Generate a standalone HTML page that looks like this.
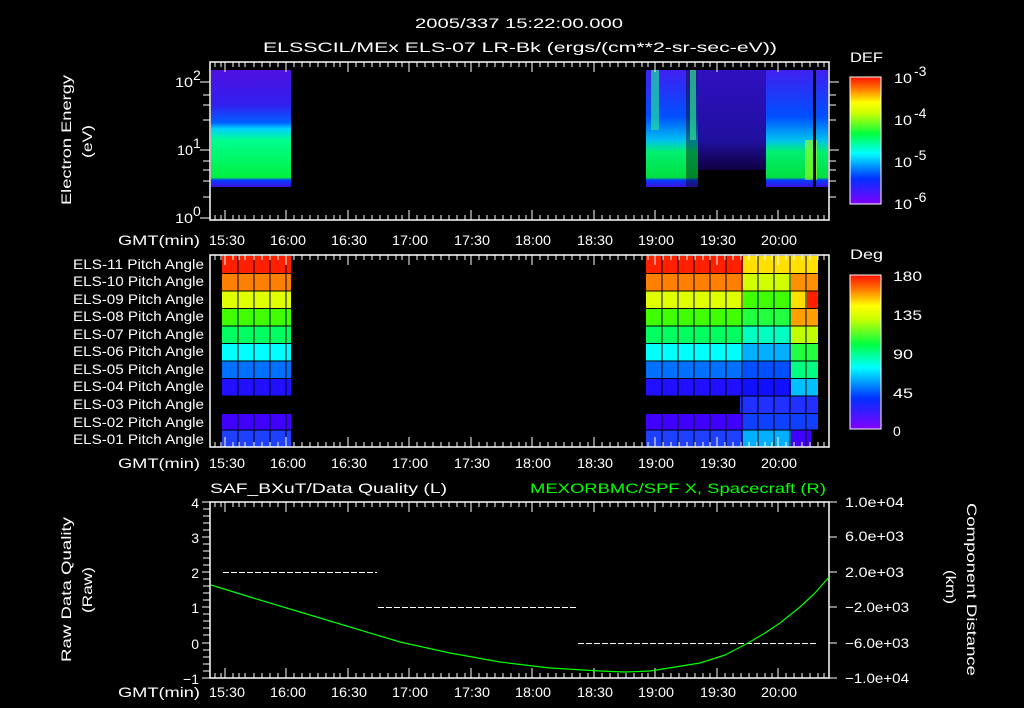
<!DOCTYPE html>
<html><head><meta charset="utf-8"><style>
html,body{margin:0;padding:0;background:#000;}
svg{display:block}
text{font-family:"Liberation Sans",sans-serif;fill:#fff;font-size:14px}
</style></head><body>
<svg width="1024" height="708" viewBox="0 0 1024 708" xmlns="http://www.w3.org/2000/svg">
<defs>
<linearGradient id="def" x1="0" y1="1" x2="0" y2="0">
<stop offset="0" stop-color="#8000ff"/><stop offset="0.2" stop-color="#0030ff"/><stop offset="0.4" stop-color="#00ffff"/><stop offset="0.55" stop-color="#00ff40"/><stop offset="0.72" stop-color="#d0ff00"/><stop offset="0.8" stop-color="#ffff00"/><stop offset="0.9" stop-color="#ff8000"/><stop offset="1" stop-color="#ff1000"/>
</linearGradient>
<linearGradient id="spL" x1="0" y1="0" x2="0" y2="1">
<stop offset="0" stop-color="#5010e0"/><stop offset="0.3" stop-color="#3020f0"/><stop offset="0.45" stop-color="#0060ff"/><stop offset="0.5" stop-color="#00d0ff"/><stop offset="0.6" stop-color="#00ff90"/><stop offset="0.92" stop-color="#00f040"/><stop offset="0.94" stop-color="#0040ff"/><stop offset="1" stop-color="#4010e0"/>
</linearGradient>
<linearGradient id="spR" x1="0" y1="0" x2="0" y2="1">
<stop offset="0" stop-color="#4020f0"/><stop offset="0.4" stop-color="#0050ff"/><stop offset="0.6" stop-color="#00c0f0"/><stop offset="0.7" stop-color="#00f070"/><stop offset="0.92" stop-color="#00e040"/><stop offset="0.94" stop-color="#0040ff"/><stop offset="1" stop-color="#4010e0"/>
</linearGradient>
<linearGradient id="spM" x1="0" y1="0" x2="0" y2="1">
<stop offset="0" stop-color="#3010c0"/><stop offset="0.7" stop-color="#2010a0"/><stop offset="1" stop-color="#100040"/>
</linearGradient>
<g id="tdn" stroke="#fff" stroke-width="1">
<path d="M225 0v10M286 0v10M348 0v10M409 0v10M471 0v10M532 0v10M594 0v10M655 0v10M717 0v10M778 0v10"/>
<path d="M215 0v5M221 0v5M233 0v5M239 0v5M245 0v5M254 0v5M262 0v5M270 0v5M278 0v5M294 0v5M302 0v5M310 0v5M318 0v5M326 0v5M334 0v5M340 0v5M356 0v5M364 0v5M372 0v5M380 0v5M388 0v5M396 0v5M402 0v5M417 0v5M425 0v5M433 0v5M441 0v5M449 0v5M457 0v5M465 0v5M479 0v5M487 0v5M495 0v5M503 0v5M511 0v5M519 0v5M526 0v5M540 0v5M548 0v5M556 0v5M564 0v5M572 0v5M580 0v5M588 0v5M602 0v5M610 0v5M618 0v5M626 0v5M634 0v5M642 0v5M648 0v5M663 0v5M671 0v5M679 0v5M687 0v5M695 0v5M703 0v5M710 0v5M725 0v5M733 0v5M741 0v5M749 0v5M757 0v5M765 0v5M772 0v5M786 0v5M794 0v5M802 0v5M810 0v5M818 0v5M824 0v5"/>
</g>
<g id="tl" font-size="14" text-anchor="start">
<text x="118" y="0" textLength="82" lengthAdjust="spacingAndGlyphs">GMT(min)</text>
<text x="209" y="0" textLength="36" lengthAdjust="spacingAndGlyphs">15:30</text><text x="270" y="0" textLength="36" lengthAdjust="spacingAndGlyphs">16:00</text><text x="331" y="0" textLength="36" lengthAdjust="spacingAndGlyphs">16:30</text><text x="392" y="0" textLength="36" lengthAdjust="spacingAndGlyphs">17:00</text><text x="454" y="0" textLength="36" lengthAdjust="spacingAndGlyphs">17:30</text><text x="515" y="0" textLength="36" lengthAdjust="spacingAndGlyphs">18:00</text><text x="577" y="0" textLength="36" lengthAdjust="spacingAndGlyphs">18:30</text><text x="638" y="0" textLength="36" lengthAdjust="spacingAndGlyphs">19:00</text><text x="700" y="0" textLength="36" lengthAdjust="spacingAndGlyphs">19:30</text><text x="761" y="0" textLength="36" lengthAdjust="spacingAndGlyphs">20:00</text>
</g>
</defs>

<text x="415" y="28" font-size="17" textLength="208" lengthAdjust="spacingAndGlyphs">2005/337 15:22:00.000</text>
<text x="263" y="52" font-size="17" textLength="514" lengthAdjust="spacingAndGlyphs">ELSSCIL/MEx ELS-07 LR-Bk  (ergs/(cm**2-sr-sec-eV))</text>

<!-- top panel -->
<rect x="211" y="70" width="80" height="117" fill="url(#spL)"/>
<rect x="646" y="70" width="40" height="117" fill="url(#spR)"/>
<rect x="651" y="70" width="8" height="60" fill="#20e0a0" opacity="0.7"/>
<rect x="686" y="70" width="12" height="117" fill="url(#spR)" opacity="0.6"/>
<rect x="690" y="70" width="6" height="70" fill="#30e090" opacity="0.7"/>
<rect x="698" y="70" width="68" height="100" fill="url(#spM)"/>
<rect x="766" y="70" width="62" height="117" fill="url(#spR)"/>
<rect x="805" y="140" width="12" height="40" fill="#a0ff20" opacity="0.6"/>
<rect x="813" y="70" width="3" height="117" fill="#000"/>
<rect x="210" y="62" width="619" height="158" fill="none" stroke="#fff" stroke-width="1.5"/>
<g stroke="#fff" stroke-width="1">
<path d="M200 82h10M203 95h7M203 105h7M203 120h7M200 150h10M203 161h7M203 170h7M203 181h7M203 197h7M200 218h10"/>
<path d="M829 82h10M829 95h7M829 105h7M829 120h7M829 150h10M829 161h7M829 170h7M829 181h7M829 197h7"/>
</g>
<use href="#tdn" transform="translate(0,62)"/>
<use href="#tdn" transform="translate(0,220) scale(1,-1)"/>
<text x="175" y="87" font-size="15" textLength="18" lengthAdjust="spacingAndGlyphs">10</text><text x="193" y="80" font-size="10">2</text>
<text x="177" y="155" font-size="15" textLength="16" lengthAdjust="spacingAndGlyphs">10</text><text x="193" y="148" font-size="10">1</text>
<text x="175" y="223" font-size="15" textLength="18" lengthAdjust="spacingAndGlyphs">10</text><text x="193" y="216" font-size="10">0</text>
<text transform="translate(71,205) rotate(-90)" font-size="15" textLength="130" lengthAdjust="spacingAndGlyphs">Electron Energy</text>
<text transform="translate(92,158) rotate(-90)" font-size="15" textLength="33" lengthAdjust="spacingAndGlyphs">(eV)</text>
<use href="#tl" transform="translate(0,245)"/>
<text x="850" y="62" font-size="17" textLength="33" lengthAdjust="spacingAndGlyphs">DEF</text>
<rect x="850" y="77" width="31" height="127" fill="url(#def)" stroke="#fff" stroke-width="1"/>
<g font-size="17">
<text x="894" y="83" textLength="18" lengthAdjust="spacingAndGlyphs">10</text><text x="914" y="76" font-size="11">-3</text>
<text x="894" y="125" textLength="18" lengthAdjust="spacingAndGlyphs">10</text><text x="914" y="118" font-size="11">-4</text>
<text x="894" y="167" textLength="18" lengthAdjust="spacingAndGlyphs">10</text><text x="914" y="160" font-size="11">-5</text>
<text x="894" y="209" textLength="18" lengthAdjust="spacingAndGlyphs">10</text><text x="914" y="202" font-size="11">-6</text>
</g>

<!-- middle panel -->
<g font-size="13">
<text x="73" y="269" textLength="131" lengthAdjust="spacingAndGlyphs">ELS-11 Pitch Angle</text>
<text x="73" y="286" textLength="131" lengthAdjust="spacingAndGlyphs">ELS-10 Pitch Angle</text>
<text x="73" y="304" textLength="131" lengthAdjust="spacingAndGlyphs">ELS-09 Pitch Angle</text>
<text x="73" y="321" textLength="131" lengthAdjust="spacingAndGlyphs">ELS-08 Pitch Angle</text>
<text x="73" y="339" textLength="131" lengthAdjust="spacingAndGlyphs">ELS-07 Pitch Angle</text>
<text x="73" y="356" textLength="131" lengthAdjust="spacingAndGlyphs">ELS-06 Pitch Angle</text>
<text x="73" y="374" textLength="131" lengthAdjust="spacingAndGlyphs">ELS-05 Pitch Angle</text>
<text x="73" y="391" textLength="131" lengthAdjust="spacingAndGlyphs">ELS-04 Pitch Angle</text>
<text x="73" y="409" textLength="131" lengthAdjust="spacingAndGlyphs">ELS-03 Pitch Angle</text>
<text x="73" y="427" textLength="131" lengthAdjust="spacingAndGlyphs">ELS-02 Pitch Angle</text>
<text x="73" y="444" textLength="131" lengthAdjust="spacingAndGlyphs">ELS-01 Pitch Angle</text>
</g>
<g>
<rect x="222" y="256" width="69" height="17" fill="#ff2000"/>
<rect x="222" y="273" width="69" height="18" fill="#ff8000"/>
<rect x="222" y="291" width="69" height="17" fill="#e0ff00"/>
<rect x="222" y="308" width="69" height="18" fill="#40ff00"/>
<rect x="222" y="326" width="69" height="17" fill="#00ff60"/>
<rect x="222" y="343" width="69" height="18" fill="#00ffff"/>
<rect x="222" y="361" width="69" height="17" fill="#0070ff"/>
<rect x="222" y="378" width="69" height="18" fill="#2010ff"/>
<rect x="222" y="413" width="69" height="17" fill="#4000ff"/>
<rect x="222" y="430" width="69" height="17" fill="#2040ff"/>

<rect x="646" y="256" width="97" height="17" fill="#ff2000"/><rect x="743" y="256" width="75" height="17" fill="#ffe000"/>
<rect x="646" y="273" width="97" height="18" fill="#ff8000"/><rect x="743" y="273" width="48" height="18" fill="#d0ff00"/><rect x="791" y="273" width="27" height="18" fill="#ff9000"/>
<rect x="646" y="291" width="97" height="17" fill="#e0ff00"/><rect x="743" y="291" width="48" height="17" fill="#40ff00"/><rect x="791" y="291" width="16" height="17" fill="#ffe000"/><rect x="807" y="291" width="11" height="17" fill="#ff2000"/>
<rect x="646" y="308" width="97" height="18" fill="#40ff00"/><rect x="743" y="308" width="48" height="18" fill="#20ff40"/><rect x="791" y="308" width="27" height="18" fill="#ffa000"/>
<rect x="646" y="326" width="97" height="17" fill="#00ff60"/><rect x="743" y="326" width="48" height="17" fill="#00ffc0"/><rect x="791" y="326" width="27" height="17" fill="#c0ff00"/>
<rect x="646" y="343" width="97" height="18" fill="#00ffff"/><rect x="743" y="343" width="48" height="18" fill="#00b0ff"/><rect x="791" y="343" width="27" height="18" fill="#20ff40"/>
<rect x="646" y="361" width="97" height="17" fill="#0070ff"/><rect x="743" y="361" width="48" height="17" fill="#0050ff"/><rect x="791" y="361" width="27" height="17" fill="#00ff80"/>
<rect x="646" y="378" width="97" height="18" fill="#2010ff"/><rect x="743" y="378" width="48" height="18" fill="#1010ff"/><rect x="791" y="378" width="27" height="18" fill="#00c0ff"/>
<rect x="740" y="396" width="78" height="17" fill="#2030ff"/>
<rect x="646" y="413" width="97" height="17" fill="#4000ff"/><rect x="743" y="413" width="75" height="17" fill="#1040ff"/>
<rect x="646" y="430" width="97" height="17" fill="#2040ff"/><rect x="743" y="430" width="48" height="17" fill="#00b0ff"/><rect x="791" y="430" width="20" height="17" fill="#4000ff"/>
</g>
<g stroke="#000" stroke-width="1">
<path d="M222 273.5h600M222 291h600M222 308.5h600M222 326h600M222 343.5h600M222 361h600M222 378.5h600M222 396h600M222 413.5h600M222 430h600"/>
<path d="M238 256v191M254 256v191M270 256v191M286 256v191M662 256v191M678 256v191M694 256v191M710 256v191M726 256v191M742 256v191M758 256v191M774 256v191M790 256v191M806 256v191"/>
</g>
<use href="#tdn" transform="translate(0,255)"/>
<use href="#tdn" transform="translate(0,447) scale(1,-1)"/>
<rect x="210" y="255" width="619" height="192" fill="none" stroke="#fff" stroke-width="1.5"/>
<use href="#tl" transform="translate(0,468)"/>
<text x="850" y="259" font-size="17" textLength="33" lengthAdjust="spacingAndGlyphs">Deg</text>
<rect x="850" y="275" width="31" height="154" fill="url(#def)" stroke="#fff" stroke-width="1"/>
<g font-size="17"><text x="893" y="281" textLength="29" lengthAdjust="spacingAndGlyphs">180</text><text x="893" y="320" textLength="29" lengthAdjust="spacingAndGlyphs">135</text><text x="893" y="359" textLength="20" lengthAdjust="spacingAndGlyphs">90</text><text x="893" y="398" textLength="20" lengthAdjust="spacingAndGlyphs">45</text><text x="893" y="436">0</text></g>

<!-- bottom panel -->
<text x="210" y="493" font-size="16" textLength="237" lengthAdjust="spacingAndGlyphs">SAF_BXuT/Data Quality (L)</text>
<text x="530" y="493" font-size="16" textLength="296" lengthAdjust="spacingAndGlyphs" style="fill:#00ff00">MEXORBMC/SPF X, Spacecraft (R)</text>
<use href="#tdn" transform="translate(0,502)"/>
<use href="#tdn" transform="translate(0,678) scale(1,-1)"/>
<rect x="210" y="502" width="619" height="176" fill="none" stroke="#fff" stroke-width="1.5"/>
<g stroke="#fff" stroke-width="1">
<path d="M202 502h8M202 537h8M202 572h8M202 607h8M202 643h8M202 678h8M829 502h8M829 537h8M829 572h8M829 607h8M829 643h8M829 678h8"/>
<path d="M203 509h7M203 516h7M203 523h7M203 530h7M203 544h7M203 551h7M203 558h7M203 565h7M203 579h7M203 586h7M203 593h7M203 600h7M203 614h7M203 621h7M203 628h7M203 635h7M203 650h7M203 657h7M203 664h7M203 671h7"/>
</g>
<g font-size="15" text-anchor="end"><text x="199" y="508">4</text><text x="199" y="543">3</text><text x="199" y="578">2</text><text x="199" y="613">1</text><text x="199" y="649">0</text><text x="199" y="684">−1</text></g>
<g font-size="13"><text x="845" y="507" textLength="59" lengthAdjust="spacingAndGlyphs">1.0e+04</text><text x="845" y="541" textLength="59" lengthAdjust="spacingAndGlyphs">6.0e+03</text><text x="845" y="577" textLength="59" lengthAdjust="spacingAndGlyphs">2.0e+03</text><text x="845" y="612" textLength="64" lengthAdjust="spacingAndGlyphs">−2.0e+03</text><text x="845" y="648" textLength="64" lengthAdjust="spacingAndGlyphs">−6.0e+03</text><text x="845" y="683" textLength="64" lengthAdjust="spacingAndGlyphs">−1.0e+04</text></g>
<text transform="translate(71,662) rotate(-90)" font-size="15" textLength="145" lengthAdjust="spacingAndGlyphs">Raw Data Quality</text>
<text transform="translate(92,613) rotate(-90)" font-size="15" textLength="46" lengthAdjust="spacingAndGlyphs">(Raw)</text>
<text transform="translate(967,503) rotate(90)" font-size="15" textLength="173" lengthAdjust="spacingAndGlyphs">Component Distance</text>
<text transform="translate(946,570) rotate(90)" font-size="15" textLength="34" lengthAdjust="spacingAndGlyphs">(km)</text>
<g stroke="#fff" stroke-width="1" stroke-dasharray="6,2">
<path d="M223 572.5h154M378 607.5h198M578 643.5h240"/>
</g>
<polyline points="211,585 250,597 300,612 350,627 400,642 450,653 500,662 550,668 600,671 625,672 650,671 700,663 725,655 748,643 765,633 780,623 800,607 815,593 829,577" fill="none" stroke="#00ff00" stroke-width="1.2" stroke-linejoin="round"/>
<use href="#tl" transform="translate(0,697)"/>
</svg>
</body></html>
